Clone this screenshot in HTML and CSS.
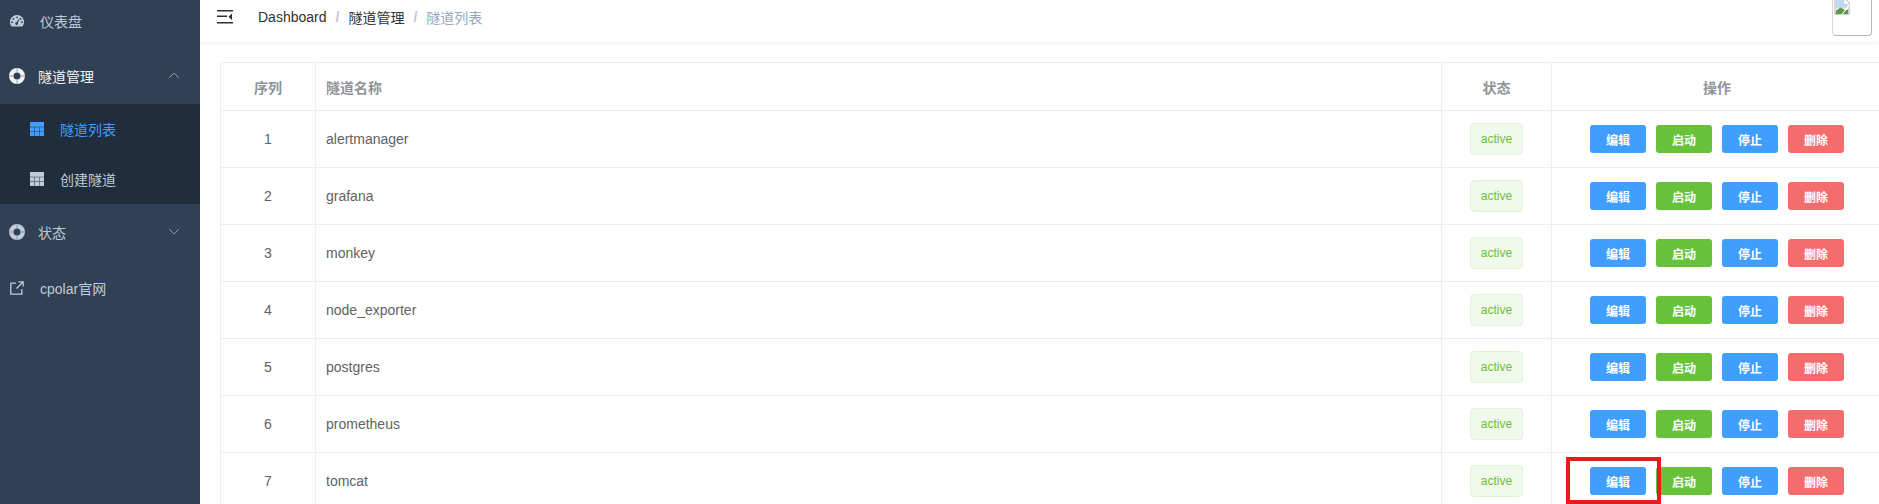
FILE: index.html
```html
<!DOCTYPE html>
<html lang="zh-CN">
<head>
<meta charset="utf-8">
<title>隧道列表</title>
<link rel="stylesheet" href="styles.css">
</head>
<body>
<div class="app">
  <aside class="sidebar">
    <a class="menu-item menu-item-clipped"><svg class="icon-gauge" viewBox="0 0 14 12"><path fill="#bfcbd9" fill-rule="evenodd" d="M7 0a7 7 0 0 1 6 10.6l-.6.9H1.600l-.6-.9A7 7 0 0 1 7 0zM7 1.400a.9.9 0 1 0 0 1.800.9.9 0 0 0 0-1.800zM3.400 3a.9.9 0 1 0 0 1.800.9.9 0 0 0 0-1.800zM10.600 3a.9.9 0 1 0 0 1.800.9.9 0 0 0 0-1.800zM2 6.300a.9.9 0 1 0 0 1.800.9.9 0 0 0 0-1.800zM12 6.300a.9.9 0 1 0 0 1.800.9.9 0 0 0 0-1.800zM9.300 3.600 6.500 7.200a1.400 1.400 0 1 0 1.300.6l1.900-4z"/></svg><span>仪表盘</span></a>
    <a class="menu-item menu-item-open"><svg class="icon-ring" viewBox="0 0 16 16"><path fill="#f4f4f5" fill-rule="evenodd" d="M8 0a8 8 0 1 1 0 16A8 8 0 0 1 8 0zM8 4.500a3.500 3.500 0 1 0 0 7 3.500 3.500 0 0 0 0-7z"/><path fill="#8a6a50" opacity=".7" d="M0 7.500h4.500v1H0zM11.500 7.500H16v1h-4.500z"/><path fill="#4f7fb0" opacity=".6" d="M7.500 0h1v4.500h-1zM7.500 11.500h1V16h-1z"/></svg><span>隧道管理</span><svg class="chevron" viewBox="0 0 12 7"><path d="M1 6l5-5 5 5"/></svg></a>
    <div class="submenu">
      <a class="submenu-item submenu-item-active"><svg class="icon-table" viewBox="0 0 14 14"><path fill="currentColor" d="M0 0h14v14H0z"/><path stroke="#1f2d3d" stroke-opacity=".45" d="M0 5h14M0 9.500h14M4.500 5v9M9.500 5v9"/></svg><span>隧道列表</span></a>
      <a class="submenu-item"><svg class="icon-table" viewBox="0 0 14 14"><path fill="currentColor" d="M0 0h14v14H0z"/><path stroke="#1f2d3d" stroke-opacity=".45" d="M0 5h14M0 9.500h14M4.500 5v9M9.500 5v9"/></svg><span>创建隧道</span></a>
    </div>
    <a class="menu-item menu-item-group"><svg class="icon-ring" viewBox="0 0 16 16"><path fill="#bfcbd9" fill-rule="evenodd" d="M8 0a8 8 0 1 1 0 16A8 8 0 0 1 8 0zM8 4.500a3.500 3.500 0 1 0 0 7 3.500 3.500 0 0 0 0-7z"/><path fill="#7d7468" opacity=".6" d="M0 7.500h4.500v1H0zM11.500 7.500H16v1h-4.500z"/><path fill="#4f7fb0" opacity=".5" d="M7.500 0h1v4.500h-1zM7.500 11.500h1V16h-1z"/></svg><span>状态</span><svg class="chevron" viewBox="0 0 12 7"><path d="M1 1l5 5 5-5"/></svg></a>
    <a class="menu-item"><svg class="icon-link" viewBox="0 0 14 14"><path fill="none" stroke="#bfcbd9" stroke-width="1.300" d="M6 2.200H.8v11h11V8M8.500.8h4.700v4.700M13 1 6.500 7.500"/></svg><span>cpolar官网</span></a>
  </aside>
  <main class="main">
    <header class="navbar">
      <svg class="hamburger" viewBox="0 0 16 14"><path fill="#303133" d="M0 0h16v1.500H0zM0 5.500h10v1.500H0zM0 12h16v1.500H0zM15 3.500v6.500L11.500 6.750z"/></svg>
      <nav class="breadcrumb">
        <span class="crumb">Dashboard</span><span class="sep">/</span><span class="crumb">隧道管理</span><span class="sep">/</span><span class="crumb crumb-current">隧道列表</span>
      </nav>
      <div class="avatar">
        <svg class="broken-image" viewBox="0 0 16 16"><path fill="#fff" stroke="#a8a8a8" d="M.5-2h10l5 5v12H.5z"/><path fill="#c5d8f2" d="M1.500 0h9v4h4v5H1.500z"/><path fill="#5c9a42" d="M1.500 15V11.500l5-3.500 5 3 3-1v5z"/><path fill="#fff" d="M7 16 15 5l1 1-8 10z"/></svg>
      </div>
    </header>
    <section class="content">
      <table class="tunnels">
        <colgroup><col class="col-index"><col><col class="col-status"><col class="col-actions"></colgroup>
        <thead>
          <tr><th>序列</th><th class="left">隧道名称</th><th>状态</th><th>操作</th></tr>
        </thead>
        <tbody>
          <tr><td>1</td><td class="left">alertmanager</td><td><span class="tag">active</span></td><td><span class="actions"><button class="btn btn-blue">编辑</button><button class="btn btn-green">启动</button><button class="btn btn-blue">停止</button><button class="btn btn-red">删除</button></span></td></tr>
          <tr><td>2</td><td class="left">grafana</td><td><span class="tag">active</span></td><td><span class="actions"><button class="btn btn-blue">编辑</button><button class="btn btn-green">启动</button><button class="btn btn-blue">停止</button><button class="btn btn-red">删除</button></span></td></tr>
          <tr><td>3</td><td class="left">monkey</td><td><span class="tag">active</span></td><td><span class="actions"><button class="btn btn-blue">编辑</button><button class="btn btn-green">启动</button><button class="btn btn-blue">停止</button><button class="btn btn-red">删除</button></span></td></tr>
          <tr><td>4</td><td class="left">node_exporter</td><td><span class="tag">active</span></td><td><span class="actions"><button class="btn btn-blue">编辑</button><button class="btn btn-green">启动</button><button class="btn btn-blue">停止</button><button class="btn btn-red">删除</button></span></td></tr>
          <tr><td>5</td><td class="left">postgres</td><td><span class="tag">active</span></td><td><span class="actions"><button class="btn btn-blue">编辑</button><button class="btn btn-green">启动</button><button class="btn btn-blue">停止</button><button class="btn btn-red">删除</button></span></td></tr>
          <tr><td>6</td><td class="left">prometheus</td><td><span class="tag">active</span></td><td><span class="actions"><button class="btn btn-blue">编辑</button><button class="btn btn-green">启动</button><button class="btn btn-blue">停止</button><button class="btn btn-red">删除</button></span></td></tr>
          <tr><td>7</td><td class="left">tomcat</td><td><span class="tag">active</span></td><td><span class="actions"><span class="highlight"></span><button class="btn btn-blue">编辑</button><button class="btn btn-green">启动</button><button class="btn btn-blue">停止</button><button class="btn btn-red">删除</button></span></td></tr>
        </tbody>
      </table>
    </section>
  </main>
</div>
</body>
</html>
```

FILE: styles.css
```css
* { box-sizing: border-box; }
html, body { margin: 0; height: 100%; overflow: hidden; }
body { font-family: "Liberation Sans", "Noto Sans CJK SC", sans-serif; font-size: 14px; color: #606266; background: #fff; }
.app { display: flex; height: 504px; overflow: hidden; }

.sidebar { flex: 0 0 200px; background: #304156; color: #bfcbd9; }
.menu-item { display: flex; align-items: center; height: 56px; padding-left: 10px; position: relative; }
.menu-item-clipped { height: 48px; padding-bottom: 6px; }
.menu-item-open { color: #f4f4f5; padding-left: 9px; }
.menu-item-group { padding-left: 9px; }
.icon-gauge, .icon-link { width: 14px; height: 14px; margin-right: 16px; flex: none; }
.icon-ring { width: 16px; height: 16px; margin-right: 13px; flex: none; }
.chevron { position: absolute; left: 168px; top: 24px; width: 12px; height: 7px; fill: none; stroke: #909399; stroke-width: 1; }
.submenu { background: #1f2d3d; }
.submenu-item { display: flex; align-items: center; height: 50px; padding-left: 30px; }
.submenu-item-active { color: #409eff; }
.icon-table { width: 14px; height: 14px; margin-right: 16px; flex: none; }

.main { flex: 1; min-width: 0; display: flex; flex-direction: column; }
.navbar { flex: 0 0 42px; display: flex; align-items: center; padding: 0 8px 8px 17px; box-shadow: 0 1px 4px rgba(0, 21, 41, .08); position: relative; }
.hamburger { width: 16px; height: 14px; flex: none; margin: -1px 25px 0 0; }
.breadcrumb { display: flex; align-items: center; color: #303133; flex: 1; }
.crumb-current { color: #97a8be; }
.sep { margin: 0 9px; color: #c0c4cc; font-weight: 700; }
.avatar { position: absolute; right: 7px; bottom: 6px; width: 40px; height: 36px; border: 1px solid #b8b8b8; border-top: 0; border-left-color: #d8d8d8; border-radius: 0 0 4px 4px; }
.broken-image { display: block; margin-left: 1px; width: 16px; height: 15px; }

.content { flex: 1; padding: 20px 0 0 20px; overflow: hidden; }
.tunnels { width: 1663px; table-layout: fixed; border-collapse: separate; border-spacing: 0; border-top: 1px solid #ebeef5; border-left: 1px solid #ebeef5; }
.col-index { width: 95px; }
.col-status { width: 110px; }
.col-actions { width: 331px; }
.tunnels th, .tunnels td { border-right: 1px solid #ebeef5; border-bottom: 1px solid #ebeef5; padding: 0 10px; text-align: center; }
.tunnels th { height: 48px; color: #909399; font-weight: 700; }
.tunnels td { height: 57px; }
.tunnels .left { text-align: left; }
.tag { display: inline-block; width: 53px; height: 32px; line-height: 30px; border: 1px solid #e1f3d8; border-radius: 4px; background: #f0f9eb; color: #67c23a; font-size: 12px; vertical-align: middle; }
.actions { display: inline-flex; gap: 10px; position: relative; vertical-align: middle; }
.btn { width: 56px; height: 28px; padding: 0; border: 0; border-radius: 3px; color: #fff; font: 700 12px "Liberation Sans", "Noto Sans CJK SC", sans-serif; }
.btn-blue { background: #409eff; }
.btn-green { background: #67c23a; }
.btn-red { background: #f56c6c; }
.highlight { position: absolute; left: -24px; top: -10px; width: 95px; height: 47px; border: 4px solid #e31c1c; z-index: 1; pointer-events: none; }
.actions .btn { position: relative; }
.actions .highlight + .btn { z-index: 2; }
```
